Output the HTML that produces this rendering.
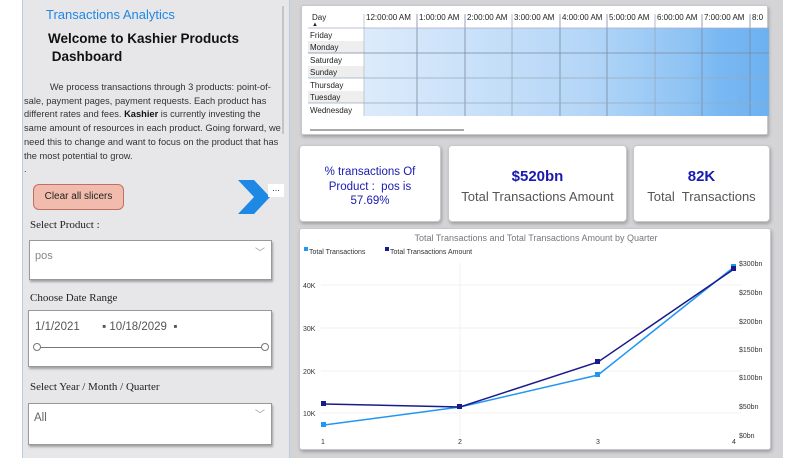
<!DOCTYPE html>
<html><head><style>
*{margin:0;padding:0;box-sizing:border-box}
body{width:800px;height:458px;overflow:hidden;background:#fff;font-family:"Liberation Sans",sans-serif;position:relative}
.a{position:absolute}
.card{position:absolute;background:#fff;border:1px solid #c8c8cc;border-radius:4px;box-shadow:1px 2px 3px rgba(0,0,0,.25)}
.ser{font-family:"Liberation Serif",serif;font-size:11px;color:#222}
.box{position:absolute;background:#fff;border:1px solid #999;box-shadow:1px 2px 2px rgba(0,0,0,.3)}
</style></head><body>
<div class="a" style="left:0;top:0;width:22px;height:458px;background:#fff"></div>
<div class="a" style="left:22px;top:0;width:268px;height:458px;background:#e7e6e9;border-left:1px solid #b9cde2;border-right:1px solid #b9cde2"></div>
<div class="a" style="left:290px;top:0;width:493px;height:458px;background:#d4d3d6"></div>
<div class="a" style="left:282px;top:6px;width:2px;height:128px;background:#c4c4c4"></div>

<div class="a" style="left:46px;top:7px;font-size:13px;color:#1e88e5">Transactions Analytics</div>
<div class="a" style="left:48px;top:30px;font-size:13.5px;font-weight:bold;color:#111;line-height:18px">Welcome to Kashier Products<br>&nbsp;Dashboard</div>
<div class="a" style="left:24px;top:81px;width:260px;font-size:9.3px;color:#333;line-height:13.7px">&nbsp;&nbsp;&nbsp;&nbsp;&nbsp;&nbsp;&nbsp;&nbsp;&nbsp;&nbsp;We process transactions through 3 products: point-of-sale, payment pages, payment requests. Each product has different rates and fees. <b style="color:#111">Kashier</b> is currently investing the same amount of resources in each product. Going forward, we need this to change and want to focus on the product that has the most potential to grow.<br>.</div>
<div class="a" style="left:33px;top:184px;width:91px;height:26px;background:#f1bcad;border:1px solid #c07060;border-radius:6px;font-size:10px;color:#222;text-align:center;line-height:24px">Clear all slicers</div>
<svg class="a" style="left:236px;top:179px" width="40" height="36"><polygon points="2,1 18,1 34,18 18,35 2,35 18,18" fill="#1e88e5"/></svg>
<div class="a" style="left:268px;top:184px;width:16px;height:13px;background:#fff;font-size:9px;line-height:8px;text-align:center;color:#333">...</div>

<div class="a ser" style="left:30px;top:219px">Select Product :</div>
<div class="box" style="left:29px;top:240px;width:243px;height:40px"><span class="a" style="left:5px;top:9px;font-size:11px;color:#888">pos</span><span class="a" style="right:6px;top:3px;font-size:10px;color:#999">﹀</span></div>
<div class="a ser" style="left:30px;top:292px">Choose Date Range</div>
<div class="box" style="left:28px;top:310px;width:244px;height:57px"><span class="a" style="left:6px;top:10px;font-size:11.5px;color:#555">1/1/2021 &nbsp;&nbsp;&nbsp;&nbsp;&nbsp;&nbsp;▪ 10/18/2029 &nbsp;▪</span><div class="a" style="left:7px;top:36px;width:230px;height:1px;background:#777"></div><div class="a" style="left:4px;top:32px;width:8px;height:8px;border:1px solid #777;border-radius:50%;background:#fff"></div><div class="a" style="left:232px;top:32px;width:8px;height:8px;border:1px solid #777;border-radius:50%;background:#fff"></div></div>
<div class="a ser" style="left:30px;top:381px">Select Year / Month / Quarter</div>
<div class="box" style="left:28px;top:403px;width:244px;height:42px"><span class="a" style="left:5px;top:8px;font-size:11.5px;color:#666">All</span><span class="a" style="right:6px;top:2px;font-size:10px;color:#999">﹀</span></div>

<!-- heatmap -->
<div class="card" style="left:301px;top:5px;width:467px;height:130px;border-radius:2px">
<svg class="a" style="left:0;top:0" width="467" height="130" font-family="Liberation Sans" font-size="8">
<defs><linearGradient id="g" x1="0" x2="1"><stop offset="0" stop-color="#ddebfb"/><stop offset=".55" stop-color="#b4d6f7"/><stop offset=".8" stop-color="#8ec3f4"/><stop offset="1" stop-color="#5aa8ef"/></linearGradient></defs>
<rect x="62" y="22" width="405" height="88" fill="url(#g)"/>
<rect x="414" y="22" width="53" height="88" fill="#7ab8f2" opacity=".6"/>
<g fill="#222"><text x="10" y="14">Day</text><text x="10" y="20" font-size="6">▲</text>
<text x="8" y="32">Friday</text><text x="8" y="44">Monday</text><text x="8" y="57">Saturday</text><text x="8" y="69">Sunday</text><text x="8" y="82">Thursday</text><text x="8" y="94">Tuesday</text><text x="8" y="107">Wednesday</text>
<text x="64" y="14">12:00:00 AM</text><text x="117" y="14">1:00:00 AM</text><text x="165" y="14">2:00:00 AM</text><text x="212" y="14">3:00:00 AM</text><text x="260" y="14">4:00:00 AM</text><text x="307" y="14">5:00:00 AM</text><text x="355" y="14">6:00:00 AM</text><text x="402" y="14">7:00:00 AM</text><text x="450" y="14">8:0</text></g>
<rect x="6" y="35" width="56" height="12" fill="#eee"/><rect x="6" y="60" width="56" height="12" fill="#eee"/><rect x="6" y="85" width="56" height="12" fill="#eee"/>
<g fill="#222"><text x="8" y="44">Monday</text><text x="8" y="69">Sunday</text><text x="8" y="94">Tuesday</text></g>
<g stroke="#7a8aa0" stroke-width=".8"><line x1="62" y1="8" x2="62" y2="110" stroke="#bbb"/><line x1="115" y1="8" x2="115" y2="110"/><line x1="163" y1="8" x2="163" y2="110"/><line x1="210" y1="8" x2="210" y2="110" stroke="#9ab"/><line x1="258" y1="8" x2="258" y2="110"/><line x1="305" y1="8" x2="305" y2="110"/><line x1="353" y1="8" x2="353" y2="110" stroke="#9ab"/><line x1="400" y1="8" x2="400" y2="110"/><line x1="448" y1="8" x2="448" y2="110"/>
<line x1="6" y1="22" x2="467" y2="22" stroke="#aac"/><line x1="6" y1="47" x2="467" y2="47"/><line x1="6" y1="72" x2="467" y2="72" stroke="#9ab"/><line x1="6" y1="97" x2="467" y2="97" stroke="#9ab"/></g>
<rect x="8" y="123" width="154" height="2" fill="#aaa"/>
</svg></div>

<!-- KPIs -->
<div class="card" style="left:299px;top:145px;width:142px;height:77px;text-align:center;color:#1a1ab0;font-size:11.5px;line-height:14.5px;padding-top:19px">% transactions Of<br>Product :&nbsp; pos is<br>57.69%</div>
<div class="card" style="left:448px;top:145px;width:179px;height:77px;text-align:center"><div style="color:#1a1ab0;font-size:15px;font-weight:bold;margin-top:22px">$520bn</div><div style="color:#555;font-size:13px;margin-top:4px">Total Transactions Amount</div></div>
<div class="card" style="left:633px;top:145px;width:137px;height:77px;text-align:center"><div style="color:#1a1ab0;font-size:15px;font-weight:bold;margin-top:22px">82K</div><div style="color:#555;font-size:13px;margin-top:4px">Total&nbsp; Transactions</div></div>

<!-- chart -->
<div class="card" style="left:299px;top:228px;width:472px;height:222px;border-radius:3px">
<svg class="a" style="left:-299px;top:-228px" width="800" height="458" font-family="Liberation Sans" font-size="7">
<text x="535" y="240" text-anchor="middle" font-size="9" fill="#777">Total Transactions and Total Transactions Amount by Quarter</text>
<rect x="303" y="246" width="4" height="4" fill="#2196f3"/><text x="308" y="253" fill="#333">Total  Transactions</text>
<rect x="384" y="246" width="4" height="4" fill="#1a1a8c"/><text x="389" y="253" fill="#333">Total Transactions Amount</text>
<g stroke="#f0f0f0"><line x1="320" y1="284" x2="740" y2="284"/><line x1="320" y1="327" x2="740" y2="327"/><line x1="320" y1="370" x2="740" y2="370"/><line x1="320" y1="412" x2="740" y2="412"/><line x1="459" y1="262" x2="459" y2="440"/></g>
<g fill="#333"><text x="302" y="287">40K</text><text x="302" y="330">30K</text><text x="302" y="373">20K</text><text x="302" y="415">10K</text>
<text x="320" y="443">1</text><text x="457" y="443">2</text><text x="595" y="443">3</text><text x="731" y="443">4</text>
<text x="738" y="265">$300bn</text><text x="738" y="294">$250bn</text><text x="738" y="323">$200bn</text><text x="738" y="351">$150bn</text><text x="738" y="379">$100bn</text><text x="738" y="408">$50bn</text><text x="738" y="437">$0bn</text></g>
<polyline points="323,424 459,406 597,374 733,266" fill="none" stroke="#2196f3" stroke-width="1.5"/>
<polyline points="323,403 459,406 597,361 733,268" fill="none" stroke="#1a1a8c" stroke-width="1.5"/>
<g fill="#2196f3"><rect x="320" y="421" width="5" height="5"/><rect x="456" y="403" width="5" height="5"/><rect x="594" y="371" width="5" height="5"/><rect x="730" y="263" width="5" height="5"/></g>
<g fill="#1a1a8c"><rect x="320" y="400" width="5" height="5"/><rect x="456" y="403" width="5" height="5"/><rect x="594" y="358" width="5" height="5"/><rect x="730" y="265" width="5" height="5"/></g>
</svg></div>
</body></html>
